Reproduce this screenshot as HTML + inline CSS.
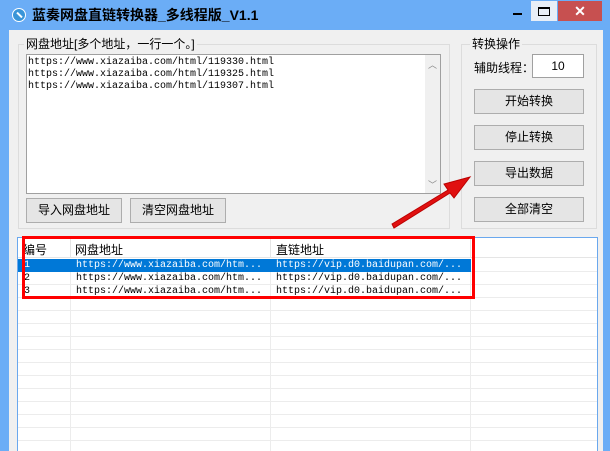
<!DOCTYPE html>
<html><head><meta charset="utf-8"><style>
*{box-sizing:border-box;margin:0;padding:0}
body{width:610px;height:451px;overflow:hidden;background:#6badf6;font-family:"Liberation Sans","Noto Sans CJK SC",sans-serif;font-size:12px;color:#000;position:relative}
.a{position:absolute}
.body{left:9px;top:30px;width:594px;height:421px;background:#f0f0f0}
.grp{border:1px solid #dcdcdc}
.lbl{background:#f0f0f0;padding:0 2px;font-size:12px;line-height:14px}
.btn{border:1px solid #adadad;background:#e5e5e5;text-align:center;line-height:22px;font-size:12px}
.mono{font-family:"Liberation Mono","Noto Sans CJK SC",monospace;font-size:10px;line-height:12px}
.row{position:absolute;left:0;width:579px;height:13px;border-bottom:1px solid #ececec}
.vl{position:absolute;top:0;bottom:0;width:1px;background:#ececec}
.cell{position:absolute;top:0;line-height:12px;white-space:nowrap}
</style></head><body>
<div class="a" style="left:12px;top:8px;width:14px;height:14px;border-radius:50%;background:#3a95d8;border:1px solid #fff"></div>
<div class="a" style="left:16px;top:14px;width:7px;height:2px;background:#fff;transform:rotate(45deg)"></div>
<div class="a" style="left:32px;top:6px;font-size:14px;font-weight:bold;line-height:18px">蓝奏网盘直链转换器_多线程版_V1.1</div>
<div class="a" style="left:513px;top:13px;width:9px;height:2px;background:#000"></div>
<div class="a" style="left:531px;top:1px;width:26px;height:20px;background:#e8eef6"></div>
<div class="a" style="left:538px;top:7px;width:12px;height:9px;border:1px solid #000;border-top-width:2px"></div>
<div class="a" style="left:558px;top:1px;width:44px;height:20px;background:#c75050;color:#fff;text-align:center;font-size:14px;line-height:20px;font-weight:bold">✕</div>
<div class="a body"></div>
<div class="a grp" style="left:18px;top:44px;width:432px;height:185px"></div>
<div class="a lbl" style="left:24px;top:37px">网盘地址[多个地址，一行一个。]</div>
<div class="a" style="left:26px;top:54px;width:415px;height:140px;background:#fff;border:1px solid #a0a0a0"></div>
<div class="a" style="left:425px;top:55px;width:15px;height:138px;background:#f0f0f0;color:#888;font-size:9px;text-align:center">
<div style="margin-top:3px">︿</div><div style="position:absolute;bottom:2px;width:15px">﹀</div></div>
<div class="a mono" style="left:28px;top:57px">https://www.xiazaiba.com/html/119330.html<br>https://www.xiazaiba.com/html/119325.html<br>https://www.xiazaiba.com/html/119307.html</div>
<div class="a btn" style="left:26px;top:198px;width:96px;height:25px">导入网盘地址</div>
<div class="a btn" style="left:130px;top:198px;width:96px;height:25px">清空网盘地址</div>
<div class="a grp" style="left:461px;top:44px;width:136px;height:185px"></div>
<div class="a lbl" style="left:470px;top:37px">转换操作</div>
<div class="a" style="left:474px;top:59px">辅助线程：</div>
<div class="a" style="left:532px;top:54px;width:52px;height:24px;background:#fff;border:1px solid #a0a0a0;text-align:center;line-height:22px">10</div>
<div class="a btn" style="left:474px;top:89px;width:110px;height:25px">开始转换</div>
<div class="a btn" style="left:474px;top:125px;width:110px;height:25px">停止转换</div>
<div class="a btn" style="left:474px;top:161px;width:110px;height:25px">导出数据</div>
<div class="a btn" style="left:474px;top:197px;width:110px;height:25px">全部清空</div>
<div class="a" style="left:17px;top:237px;width:581px;height:214px;background:#fff;border:1px solid #6aa8ee;border-bottom:none;overflow:hidden">
 <div class="a" style="left:0;top:0;width:579px;height:20px;border-bottom:1px solid #e5e5e5"></div>
 <div class="a" style="left:52px;top:0;width:1px;height:20px;background:#e5e5e5"></div>
 <div class="a" style="left:252px;top:0;width:1px;height:20px;background:#e5e5e5"></div>
 <div class="a" style="left:452px;top:0;width:1px;height:20px;background:#e5e5e5"></div>
 <div class="a" style="left:5px;top:3px">编号</div>
 <div class="a" style="left:57px;top:3px">网盘地址</div>
 <div class="a" style="left:258px;top:3px">直链地址</div>
 <div class="a" style="left:0;top:21px;width:579px;height:200px">
  <div class="vl" style="left:52px"></div><div class="vl" style="left:252px"></div><div class="vl" style="left:452px"></div>
  <div class="row" style="top:0;width:453px;background:#0078d7;border-bottom:none"></div>
  <div class="row" style="top:0;left:453px;width:126px"></div>
  <div class="row" style="top:13px"></div><div class="row" style="top:26px"></div><div class="row" style="top:39px"></div>
  <div class="row" style="top:52px"></div><div class="row" style="top:65px"></div><div class="row" style="top:78px"></div>
  <div class="row" style="top:91px"></div><div class="row" style="top:104px"></div><div class="row" style="top:117px"></div>
  <div class="row" style="top:130px"></div><div class="row" style="top:143px"></div><div class="row" style="top:156px"></div>
  <div class="row" style="top:169px"></div><div class="row" style="top:182px"></div>
  <div class="mono" style="position:absolute;top:1px;left:0;width:579px">
   <div style="position:relative;height:13px;color:#fff"><span class="cell" style="left:6px">1</span><span class="cell" style="left:58px">https://www.xiazaiba.com/htm...</span><span class="cell" style="left:258px">https://vip.d0.baidupan.com/...</span></div>
   <div style="position:relative;height:13px"><span class="cell" style="left:6px">2</span><span class="cell" style="left:58px">https://www.xiazaiba.com/htm...</span><span class="cell" style="left:258px">https://vip.d0.baidupan.com/...</span></div>
   <div style="position:relative;height:13px"><span class="cell" style="left:6px">3</span><span class="cell" style="left:58px">https://www.xiazaiba.com/htm...</span><span class="cell" style="left:258px">https://vip.d0.baidupan.com/...</span></div>
  </div>
 </div>
</div>
<div class="a" style="left:22px;top:236px;width:453px;height:63px;border:3px solid #f00"></div>
<svg class="a" style="left:380px;top:165px" width="100" height="70" viewBox="0 0 100 70">
<polygon points="12,59 68,25 64,19 90,12 74,33 70,28 14,63" fill="#e01010" stroke="#b00" stroke-width="1"/>
</svg>
</body></html>
